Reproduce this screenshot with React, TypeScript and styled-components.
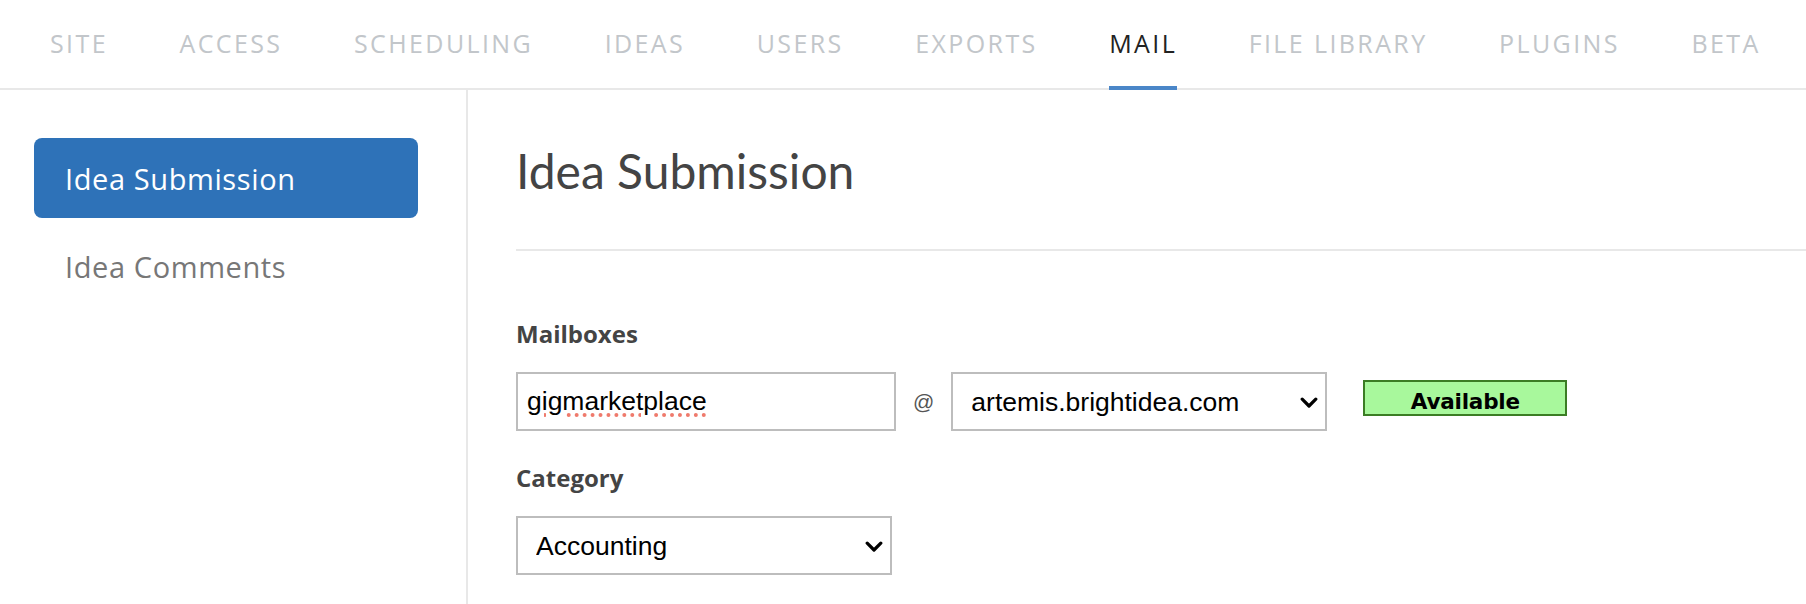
import React from "react";
import styled, { createGlobalStyle, css } from "styled-components";

const GlobalStyle = createGlobalStyle`
  html, body {
    margin: 0;
    padding: 0;
    background: #ffffff;
  }
  body {
    font-family: "Open Sans", "Noto Sans", sans-serif;
  }
  * { box-sizing: border-box; }
`;

const Page = styled.div`
  display: flex;
  flex-direction: column;
  min-height: 100vh;
  overflow: hidden;
`;

const TabBar = styled.nav`
  display: flex;
  gap: 71.5px;
  height: 90px;
  padding-left: 50px;
  border-bottom: 2px solid #e8e8e8;
`;

const Tab = styled.a<{ $active?: boolean }>`
  position: relative;
  padding-top: 26px;
  font-family: "Open Sans", sans-serif;
  font-size: 25px;
  line-height: normal;
  letter-spacing: 2.4px;
  text-transform: uppercase;
  text-decoration: none;
  white-space: nowrap;
  color: ${(p) => (p.$active ? "#222222" : "#c2c6ca")};
  cursor: pointer;
  ${(p) =>
    p.$active &&
    css`
      &::after {
        content: "";
        position: absolute;
        left: 0;
        right: 0;
        bottom: -2px;
        height: 4px;
        background: #4a86c8;
      }
    `}
`;

const Body = styled.div`
  display: flex;
  flex: 1;
`;

const Sidebar = styled.aside`
  width: 468px;
  flex: none;
  padding: 48px 0 0 34px;
  border-right: 2px solid #e8e8e8;
  display: flex;
  flex-direction: column;
  gap: 8px;
`;

const SideItem = styled.a<{ $active?: boolean }>`
  display: flex;
  align-items: center;
  width: 384px;
  height: 80px;
  padding: 0 31px;
  border-radius: 8px;
  font-family: "Open Sans", sans-serif;
  font-size: 29px;
  letter-spacing: 0.6px;
  color: ${(p) => (p.$active ? "#ffffff" : "#777777")};
  background: ${(p) => (p.$active ? "#2e72b8" : "transparent")};
  cursor: pointer;
`;

const Main = styled.main`
  flex: 1;
  padding-left: 48px;
`;

const HeadingBlock = styled.header`
  padding: 52px 0 50px;
  border-bottom: 2px solid #e8e8e8;
`;

const Heading = styled.h1`
  margin: 0;
  font-family: Lato, "Open Sans", sans-serif;
  font-weight: 400;
  font-size: 48px;
  line-height: normal;
  color: #444444;
`;

const Form = styled.form`
  padding-top: 66px;
  display: flex;
  flex-direction: column;
`;

const Label = styled.label`
  display: block;
  margin-bottom: 22px;
  font-family: "Open Sans", sans-serif;
  font-weight: 700;
  font-size: 24px;
  line-height: normal;
  color: #444444;
`;

const FieldRow = styled.div<{ $spaced?: boolean }>`
  display: flex;
  align-items: center;
  gap: 17px;
  margin-bottom: ${(p) => (p.$spaced ? "30px" : "0")};
`;

const TextInput = styled.input`
  width: 380px;
  height: 59px;
  padding: 0 9px;
  border: 2px solid #bdbdbd;
  border-radius: 0;
  outline: none;
  font-family: "Liberation Sans", Arial, sans-serif;
  font-size: 26.5px;
  color: #000000;
  background: #ffffff;
  text-decoration: underline dotted #ef7a6c;
  text-decoration-thickness: 4px;
  text-underline-offset: 3px;
`;

const At = styled.span`
  font-family: "Liberation Sans", Arial, sans-serif;
  font-size: 21px;
  color: #555555;
`;

const SelectWrap = styled.div`
  position: relative;
  width: 376px;
  height: 59px;
`;

const Select = styled.select`
  width: 100%;
  height: 100%;
  padding: 0 40px 0 18px;
  border: 2px solid #bdbdbd;
  border-radius: 0;
  outline: none;
  appearance: none;
  -webkit-appearance: none;
  background: #ffffff;
  font-family: "Liberation Sans", Arial, sans-serif;
  font-size: 26.5px;
  color: #000000;
`;

const Chevron = styled.svg`
  position: absolute;
  right: 9px;
  top: 50%;
  width: 18px;
  height: 12px;
  margin-top: -5px;
  pointer-events: none;
`;

const Badge = styled.div`
  align-self: flex-start;
  margin-top: 8px;
  margin-left: 19px;
  width: 204px;
  height: 36px;
  padding-top: 6px;
  display: flex;
  align-items: center;
  justify-content: center;
  background: #a8f89c;
  border: 2px solid #3b7d24;
  font-family: "DejaVu Sans", Verdana, sans-serif;
  font-weight: 700;
  font-size: 21.5px;
  letter-spacing: -0.2px;
  color: #000000;
`;

const DropDown: React.FC<{ value: string; options: string[] }> = ({ value, options }) => (
  <SelectWrap>
    <Select defaultValue={value}>
      {options.map((o) => (
        <option key={o} value={o}>
          {o}
        </option>
      ))}
    </Select>
    <Chevron viewBox="0 0 18 12">
      <path d="M2.2 2.2 L9 9 L15.8 2.2" fill="none" stroke="#000" strokeWidth="3.2" strokeLinecap="round" strokeLinejoin="round" />
    </Chevron>
  </SelectWrap>
);

const tabs = ["Site", "Access", "Scheduling", "Ideas", "Users", "Exports", "Mail", "File Library", "Plugins", "Beta"];

export default function App() {
  return (
    <>
      <GlobalStyle />
      <Page>
        <TabBar>
          {tabs.map((t) => (
            <Tab key={t} $active={t === "Mail"}>
              {t}
            </Tab>
          ))}
        </TabBar>
        <Body>
          <Sidebar>
            <SideItem $active>Idea Submission</SideItem>
            <SideItem>Idea Comments</SideItem>
          </Sidebar>
          <Main>
            <HeadingBlock>
              <Heading>Idea Submission</Heading>
            </HeadingBlock>
            <Form onSubmit={(e) => e.preventDefault()}>
              <Label>Mailboxes</Label>
              <FieldRow $spaced>
                <TextInput defaultValue="gigmarketplace" spellCheck={false} />
                <At>@</At>
                <DropDown value="artemis.brightidea.com" options={["artemis.brightidea.com"]} />
                <Badge>Available</Badge>
              </FieldRow>
              <Label>Category</Label>
              <FieldRow>
                <DropDown value="Accounting" options={["Accounting", "Engineering", "Marketing", "Sales"]} />
              </FieldRow>
            </Form>
          </Main>
        </Body>
      </Page>
    </>
  );
}
